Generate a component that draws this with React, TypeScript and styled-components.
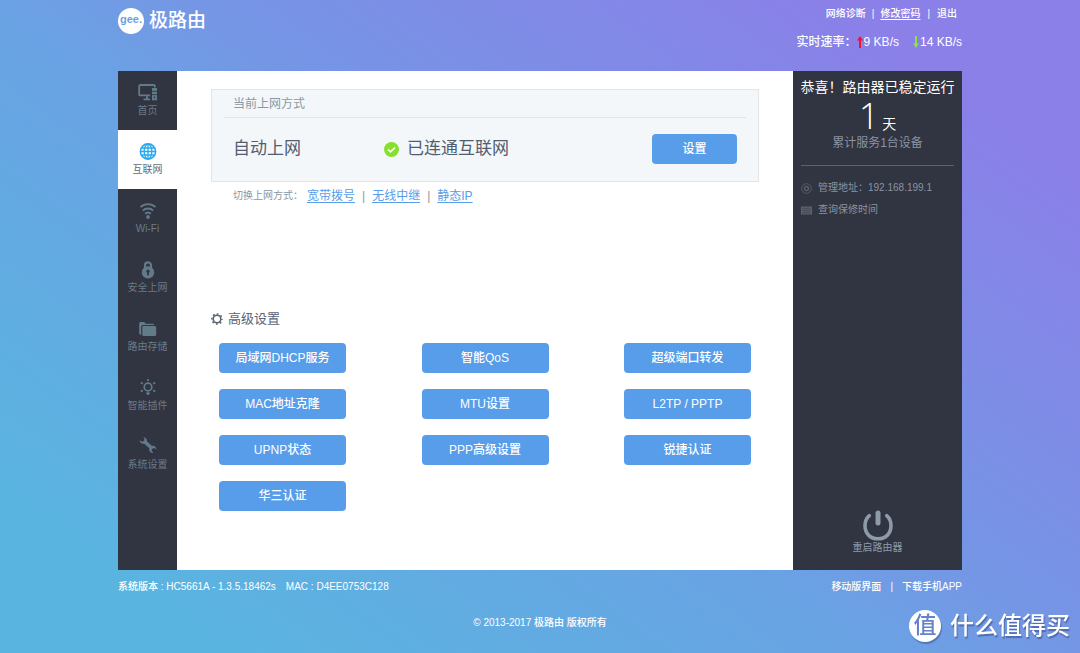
import React from "react";
import styled, { createGlobalStyle } from "styled-components";

const GlobalStyle = createGlobalStyle`
  * { box-sizing: border-box; }
  html { min-height: 100%; }
  body {
    margin: 0;
    min-height: 100vh;
    background: linear-gradient(36deg, #5ab4e0 12%, #6aa2e4 45%, #7596e5 55%, #8a80e8 87%);
    font-family: "Liberation Sans", "Noto Sans CJK SC", sans-serif;
    font-size: 10px;
    line-height: 16px;
    color: #fff;
  }
  a { color: inherit; text-decoration: none; }
  h1, h2, p, ul { margin: 0; padding: 0; font-weight: inherit; font-size: inherit; }
  ul { list-style: none; }
  button { font-family: inherit; cursor: pointer; border: 0; padding: 0; }
`;

const Page = styled.div`
  width: 100%;
  max-width: 844px;
  margin: 0 auto;
`;

const Header = styled.header`
  display: flex;
  justify-content: space-between;
  min-height: 71px;
`;

const Brand = styled.a`
  display: flex;
  align-items: center;
  align-self: flex-start;
  gap: 5px;
  padding-top: 8px;
  font-size: 19px;
  line-height: 26px;
  font-weight: 500;
`;

const BrandMark = styled.span`
  width: 26px;
  height: 26px;
  border-radius: 50%;
  background: #fff;
  color: #6b9fe4;
  font-family: "Liberation Sans", sans-serif;
  font-size: 11px;
  line-height: 23px;
  font-weight: 700;
  text-align: center;
`;

const Account = styled.div`
  display: flex;
  flex-direction: column;
  align-items: flex-end;
  gap: 12px;
  padding-top: 6px;
  font-weight: 500;
`;

const AccountLinks = styled.nav`
  display: flex;
  padding-right: 5px;
`;

const AccountLink = styled.a<{ $underlined?: boolean }>`
  text-decoration: ${(p) => (p.$underlined ? "underline" : "none")};
  text-underline-offset: 2px;
`;

const Bar = styled.span<{ $gap: number }>`
  padding: 0 ${(p) => p.$gap}px;
`;

const Rates = styled.div`
  display: flex;
  align-items: center;
  font-size: 12px;
`;

const Rate = styled.span`
  display: flex;
  align-items: center;
  gap: 1px;
  & + & { margin-left: 14px; }
`;

const Console = styled.div`
  display: flex;
  min-height: 499px;
  background: #fff;
`;

const Sidebar = styled.nav`
  flex: 0 0 59px;
  background: #313441;
`;

const NavItem = styled.a<{ $active?: boolean }>`
  display: flex;
  flex-direction: column;
  align-items: center;
  height: 59px;
  padding-top: 10px;
  color: ${(p) => (p.$active ? "#5f6d7b" : "#6b7b89")};
  background: ${(p) => (p.$active ? "#fff" : "transparent")};
  & > svg {
    width: 22px;
    height: 22px;
    color: ${(p) => (p.$active ? "#27a9ee" : "#637a89")};
  }
`;

const Main = styled.main`
  flex: 1;
  min-width: 0;
  padding: 18px 34px 0;
`;

const Card = styled.section`
  height: 93px;
  padding: 0 12px;
  border: 1px solid #e0e5e7;
  background: #f3f7fa;
`;

const CardTitle = styled.h2`
  height: 28px;
  padding-left: 9px;
  border-bottom: 1px solid #dfe4e7;
  color: #8a98a3;
  font-size: 12px;
  line-height: 28px;
`;

const Status = styled.div`
  display: flex;
  align-items: center;
  height: 62px;
  padding: 0 9px;
  color: #545d70;
  font-size: 17px;
  line-height: 24px;
`;

const Mode = styled.span`
  flex: 0 0 151px;
`;

const Connection = styled.span`
  display: flex;
  flex: 1;
  align-items: center;
  gap: 8px;
`;

const BlueButton = styled.button<{ $width: number }>`
  width: ${(p) => p.$width}px;
  height: 30px;
  border-radius: 4px;
  background: #589de9;
  color: #fff;
  font-size: 12px;
  font-weight: 500;
  line-height: 28px;
`;

const Switcher = styled.p`
  display: flex;
  padding: 6px 0 0 22px;
  color: #8a96a0;
`;

const Alternatives = styled.span`
  display: flex;
  padding-left: 4px;
  font-size: 12px;
`;

const ModeLink = styled.a`
  color: #589de9;
  text-decoration: underline;
  text-underline-offset: 2px;
`;

const AdvancedTitle = styled.h2`
  display: flex;
  align-items: center;
  gap: 5px;
  margin-top: 105px;
  color: #596376;
  font-size: 13px;
  line-height: 20px;
`;

const AdvancedGrid = styled.div`
  display: grid;
  grid-template-columns: repeat(3, auto);
  justify-content: space-between;
  gap: 16px;
  padding: 14px 8px 24px;
`;

const Info = styled.aside`
  display: flex;
  flex: 0 0 169px;
  min-width: 0;
  flex-direction: column;
  padding: 6px 8px 15px;
  background: #313441;
  color: #8b93a3;
  text-align: center;
`;

const Congrats = styled.h2`
  display: flex;
  justify-content: center;
  color: #fff;
  font-size: 14px;
  line-height: 20px;
  white-space: nowrap;
`;

const Uptime = styled.p`
  display: flex;
  align-items: baseline;
  justify-content: center;
  gap: 3px;
  height: 38px;
  color: #fff;
  font-size: 14px;
  line-height: 38px;
`;

const Days = styled.span`
  font-family: "Open Sans", sans-serif;
  font-size: 36px;
  font-weight: 300;
`;

const Served = styled.p`
  height: 31px;
  border-bottom: 1px solid #5c616d;
  font-size: 12px;
`;

const Facts = styled.ul`
  display: grid;
  gap: 6px;
  padding-top: 14px;
`;

const Fact = styled.li`
  display: flex;
  align-items: center;
  gap: 6px;
`;

const Restart = styled.button`
  display: flex;
  flex-direction: column;
  align-items: center;
  align-self: center;
  margin-top: auto;
  background: none;
  color: #8d9aa8;
  font-size: 10px;
  line-height: 14px;
`;

const Footer = styled.footer`
  padding-top: 9px;
  font-weight: 500;
`;

const FooterRow = styled.div`
  display: flex;
  justify-content: space-between;
`;

const Version = styled.p`
  display: flex;
  gap: 10px;
`;

const Copyright = styled.p`
  padding: 20px 0 12px;
  text-align: center;
`;

const Watermark = styled.div`
  position: fixed;
  right: 10px;
  bottom: 11px;
  display: flex;
  align-items: center;
  gap: 9px;
  font-size: 24px;
  font-weight: 500;
  line-height: 32px;
  text-shadow: 1px 2px 1px rgba(50, 70, 130, 0.55);
`;

const Seal = styled.span`
  width: 32px;
  height: 32px;
  border-radius: 50%;
  background: #fff;
  box-shadow: 1px 2px 1px rgba(50, 70, 130, 0.45);
  color: #6583c8;
  font-size: 23px;
  line-height: 30px;
  text-align: center;
  text-shadow: none;
`;

const DevicesIcon = () => (
  <svg viewBox="0 0 22 22" fill="none" stroke="currentColor" strokeWidth="1.8">
    <path d="M13 14.4H3.200a1 1 0 0 1-1-1V5a1 1 0 0 1 1-1h13.600a1 1 0 0 1 1 1v1.500" />
    <path d="M6.500 18.400h6.500M10 14.800v3" />
    <path d="M15 7h5v12.300h-5z" fill="currentColor" stroke="none" />
    <path d="M15 10.400h5M15 13.600h5" stroke="#313441" strokeWidth="0.800" />
    <circle cx="17.500" cy="16.400" r="0.800" fill="#313441" stroke="none" />
  </svg>
);

const GlobeIcon = () => (
  <svg viewBox="0 0 22 22" fill="none" stroke="currentColor">
    <circle cx="11" cy="11.500" r="7.600" strokeWidth="1.600" />
    <path d="M11 4v15M3.500 11.500h15M4.800 8h12.400M4.800 15h12.400" strokeWidth="1.300" />
    <ellipse cx="11" cy="11.500" rx="3.800" ry="7.400" strokeWidth="1.300" />
  </svg>
);

const WifiIcon = () => (
  <svg viewBox="0 0 22 22" fill="none" stroke="currentColor" strokeWidth="1.900">
    <path d="M3.500 8.100c4.300-4 10.700-4 15 0M5.800 11.600c3-2.800 7.400-2.800 10.400 0M8.100 14.800c1.700-1.500 4.100-1.500 5.800 0" />
    <circle cx="11" cy="18" r="1.900" fill="currentColor" stroke="none" />
  </svg>
);

const LockIcon = () => (
  <svg viewBox="0 0 22 22" fill="none">
    <path d="M8 11V7.400a3 3 0 0 1 6 0V11" stroke="currentColor" strokeWidth="2.200" />
    <circle cx="11" cy="14.400" r="6.200" fill="currentColor" />
    <circle cx="11" cy="13.200" r="1.600" fill="#313441" />
    <path d="M10.300 13.500h1.400l.3 3.800h-2z" fill="#313441" />
  </svg>
);

const FolderIcon = () => (
  <svg viewBox="0 0 22 22" fill="currentColor">
    <path d="M2.200 16.500V6.600c0-.9.6-1.500 1.500-1.500h3.500l1.600 1.700h7c.8 0 1.400.5 1.400 1.300H6.500c-1.400 0-2.300.9-2.300 2.300v7.400c-1.200 0-2-.5-2-1.300z" />
    <path d="M5.300 10.500c0-.9.6-1.500 1.500-1.500h10.900c.9 0 1.500.6 1.500 1.500v6.900c0 .9-.6 1.500-1.500 1.500H6.800c-.9 0-1.500-.6-1.500-1.500z" />
  </svg>
);

const PluginIcon = () => (
  <svg viewBox="0 0 22 22" fill="none" stroke="currentColor" strokeWidth="1.700">
    <circle cx="11" cy="11" r="3.800" />
    <path d="M11 3v2M3.800 6.500l2 1.200M18.200 6.500l-2 1.200M3.800 15.500l2-1.200M18.200 15.500l-2-1.200" />
    <path d="M9.300 16.300h3.400v1.300l-1 1.400h-1.400l-1-1.400z" fill="currentColor" stroke="none" />
  </svg>
);

const WrenchIcon = () => (
  <svg viewBox="0 0 22 22" fill="currentColor">
    <path d="M6.200 1.900c2.400.1 4 2 3.700 4.300l5.100 4.700c2.300-.5 4.300 1.100 4.500 3.500l-2.300-1.500-2.300 1-.3 2.200 2.200 1.900c-2.400.5-4.600-1.100-4.600-3.500 0-.5 0-.8.200-1.200L7.200 8.700C4.800 9.300 2.700 7.600 2.700 5.200l2.400 1.500 2-1 .3-2z" />
  </svg>
);

const CheckIcon = () => (
  <svg width="15" height="15" viewBox="0 0 15 15" fill="none">
    <circle cx="7.500" cy="7.500" r="7.500" fill="#86e02c" />
    <path d="M4 7.500l2.500 2.400 4.600-4.400" stroke="#fff" strokeWidth="1.700" />
  </svg>
);

const GearIcon = () => (
  <svg width="12" height="12" viewBox="0 0 12 12" fill="none" stroke="#596376">
    <circle cx="6" cy="6" r="3.800" strokeWidth="1.600" />
    <circle cx="6" cy="6" r="5.100" strokeWidth="1.500" strokeDasharray="1.800 2.205" strokeDashoffset="0.900" />
  </svg>
);

const ArrowIcon = ({ color, down }: { color: string; down?: boolean }) => (
  <svg width="6" height="12" viewBox="0 0 6 12" fill={color}>
    <path d={down ? "M2 0h2v7.500h2L3 12 0 7.500h2z" : "M3 0l3 4.500H4V12H2V4.500H0z"} />
  </svg>
);

const TargetIcon = () => (
  <svg width="11" height="11" viewBox="0 0 11 11" fill="none" stroke="#565f6c">
    <circle cx="5.500" cy="5.500" r="4.800" />
    <circle cx="5.500" cy="5.500" r="2" strokeWidth="1.300" />
  </svg>
);

const CalendarIcon = () => (
  <svg width="11" height="11" viewBox="0 0 11 11" fill="none" stroke="#5c6673">
    <rect x="0.500" y="2" width="10" height="7" fill="#474e5a" />
    <path d="M1 4.300h9M1 6.600h9" strokeWidth="0.700" />
  </svg>
);

const PowerIcon = () => (
  <svg width="30" height="31" viewBox="0 0 30 31" fill="none" stroke="currentColor" strokeLinecap="round">
    <path d="M6.300 5.600C3.600 8 2 11.200 2 15.500 2 24 7.600 28.800 15 28.800S28 24 28 15.500c0-4.300-1.600-7.500-4.300-9.900" strokeWidth="3.600" />
    <path d="M15 3v10" strokeWidth="5" />
  </svg>
);

const navItems = [
  { label: "首页", icon: <DevicesIcon /> },
  { label: "互联网", icon: <GlobeIcon />, active: true },
  { label: "Wi-Fi", icon: <WifiIcon /> },
  { label: "安全上网", icon: <LockIcon /> },
  { label: "路由存储", icon: <FolderIcon /> },
  { label: "智能插件", icon: <PluginIcon /> },
  { label: "系统设置", icon: <WrenchIcon /> },
];

const advanced = [
  "局域网DHCP服务",
  "智能QoS",
  "超级端口转发",
  "MAC地址克隆",
  "MTU设置",
  "L2TP / PPTP",
  "UPNP状态",
  "PPP高级设置",
  "锐捷认证",
  "华三认证",
];

export default function App() {
  return (
    <>
      <GlobalStyle />
      <Page>
        <Header>
          <Brand href="#">
            <BrandMark>gee.</BrandMark>
            极路由
          </Brand>
          <Account>
            <AccountLinks>
              <AccountLink href="#">网络诊断</AccountLink>
              <Bar $gap={6}>|</Bar>
              <AccountLink href="#" $underlined>修改密码</AccountLink>
              <Bar $gap={7}>|</Bar>
              <AccountLink href="#">退出</AccountLink>
            </AccountLinks>
            <Rates>
              实时速率：
              <Rate><ArrowIcon color="#f0132b" />9 KB/s</Rate>
              <Rate><ArrowIcon color="#8be04a" down />14 KB/s</Rate>
            </Rates>
          </Account>
        </Header>

        <Console>
          <Sidebar>
            {navItems.map((item) => (
              <NavItem key={item.label} href="#" $active={item.active}>
                {item.icon}
                {item.label}
              </NavItem>
            ))}
          </Sidebar>

          <Main>
            <Card>
              <CardTitle>当前上网方式</CardTitle>
              <Status>
                <Mode>自动上网</Mode>
                <Connection><CheckIcon />已连通互联网</Connection>
                <BlueButton type="button" $width={85}>设置</BlueButton>
              </Status>
            </Card>
            <Switcher>
              切换上网方式：
              <Alternatives>
                <ModeLink href="#">宽带拨号</ModeLink>
                <Bar $gap={7}>|</Bar>
                <ModeLink href="#">无线中继</ModeLink>
                <Bar $gap={7}>|</Bar>
                <ModeLink href="#">静态IP</ModeLink>
              </Alternatives>
            </Switcher>

            <AdvancedTitle><GearIcon />高级设置</AdvancedTitle>
            <AdvancedGrid>
              {advanced.map((name) => (
                <BlueButton key={name} type="button" $width={127}>{name}</BlueButton>
              ))}
            </AdvancedGrid>
          </Main>

          <Info>
            <Congrats>恭喜！路由器已稳定运行</Congrats>
            <Uptime><Days>1</Days>天</Uptime>
            <Served>累计服务1台设备</Served>
            <Facts>
              <Fact><TargetIcon />管理地址：192.168.199.1</Fact>
              <Fact><CalendarIcon /><a href="#">查询保修时间</a></Fact>
            </Facts>
            <Restart type="button"><PowerIcon />重启路由器</Restart>
          </Info>
        </Console>

        <Footer>
          <FooterRow>
            <Version>
              <span>系统版本 : HC5661A - 1.3.5.18462s</span>
              <span>MAC : D4EE0753C128</span>
            </Version>
            <div>
              <a href="#">移动版界面</a>
              <Bar $gap={9}>|</Bar>
              <a href="#">下载手机APP</a>
            </div>
          </FooterRow>
          <Copyright>© 2013-2017 极路由 版权所有</Copyright>
        </Footer>
      </Page>
      <Watermark><Seal>值</Seal>什么值得买</Watermark>
    </>
  );
}
